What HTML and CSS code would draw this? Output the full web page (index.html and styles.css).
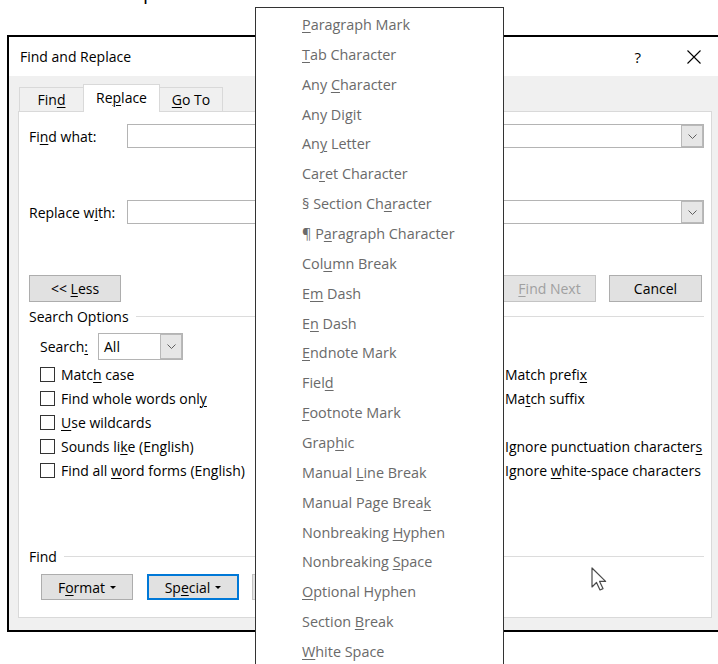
FILE: index.html
```html
<!DOCTYPE html>
<html lang="en">
<head>
<meta charset="utf-8">
<title>Find and Replace</title>
<link rel="stylesheet" href="styles.css">
</head>
<body>
<div class="caption"><span>p</span></div>

<div class="dialog">
  <div class="titlebar">
    <span class="title">Find and Replace</span>
    <div class="title-actions">
      <span class="help">?</span>
      <svg class="close" width="14" height="14" viewBox="0 0 14 14"><path d="M0.5 0.5L13.5 13.5M13.5 0.5L0.5 13.5" stroke="#000" stroke-width="1.1" fill="none"/></svg>
    </div>
  </div>

  <div class="body">
    <div class="tabs">
      <div class="tab tab-find"><span>Fin<u>d</u></span></div>
      <div class="tab tab-replace active"><span>Re<u>p</u>lace</span></div>
      <div class="tab tab-goto"><span><u>G</u>o To</span></div>
    </div>

    <div class="panel">
      <div class="field">
        <label class="field-label">Fi<u>n</u>d what:</label>
        <div class="combo">
          <span class="combo-btn"><svg width="9" height="5" viewBox="0 0 9 5"><path d="M0.5 0.5L4.5 4.5L8.5 0.5" fill="none" stroke="#5f5f5f"/></svg></span>
        </div>
      </div>

      <div class="field field-replace">
        <label class="field-label">Replace w<u>i</u>th:</label>
        <div class="combo">
          <span class="combo-btn"><svg width="9" height="5" viewBox="0 0 9 5"><path d="M0.5 0.5L4.5 4.5L8.5 0.5" fill="none" stroke="#5f5f5f"/></svg></span>
        </div>
      </div>

      <div class="actions">
        <button class="btn btn-less"><span>&lt;&lt; <u>L</u>ess</span></button>
        <div class="action-group">
          <button class="btn disabled"><span><u>F</u>ind Next</span></button>
          <button class="btn"><span>Cancel</span></button>
        </div>
      </div>

      <div class="group-head"><span>Search Options</span><i class="rule"></i></div>

      <div class="search-row">
        <label class="search-label">Search<u>:</u></label>
        <div class="select">
          <span class="select-value">All</span>
          <span class="combo-btn"><svg width="9" height="5" viewBox="0 0 9 5"><path d="M0.5 0.5L4.5 4.5L8.5 0.5" fill="none" stroke="#5f5f5f"/></svg></span>
        </div>
      </div>

      <div class="options">
        <label class="check"><span class="box"></span><span>Matc<u>h</u> case</span></label>
        <label class="check"><span class="box"></span><span>Match prefi<u>x</u></span></label>
        <label class="check"><span class="box"></span><span>Find whole words onl<u>y</u></span></label>
        <label class="check"><span class="box"></span><span>Ma<u>t</u>ch suffix</span></label>
        <label class="check"><span class="box"></span><span><u>U</u>se wildcards</span></label>
        <span></span>
        <label class="check"><span class="box"></span><span>Sounds li<u>k</u>e (English)</span></label>
        <label class="check"><span class="box"></span><span>Ignore punctuation character<u>s</u></span></label>
        <label class="check"><span class="box"></span><span>Find all <u>w</u>ord forms (English)</span></label>
        <label class="check"><span class="box"></span><span>Ignore <u>w</u>hite-space characters</span></label>
      </div>

      <div class="group-head group-find"><span>Find</span><i class="rule"></i></div>

      <div class="find-buttons">
        <button class="btn btn-small"><span>F<u>o</u>rmat</span><i class="caret"></i></button>
        <button class="btn btn-small focused"><span>Sp<u>e</u>cial</span><i class="caret"></i></button>
        <button class="btn btn-wide disabled" aria-label="No Formatting"></button>
      </div>
    </div>
  </div>
</div>

<ul class="menu">
  <li><u>P</u>aragraph Mark</li>
  <li><u>T</u>ab Character</li>
  <li>Any <u>C</u>haracter</li>
  <li>Any Di<u>g</u>it</li>
  <li>An<u>y</u> Letter</li>
  <li>Ca<u>r</u>et Character</li>
  <li>§ Section Ch<u>a</u>racter</li>
  <li>¶ P<u>a</u>ragraph Character</li>
  <li>Col<u>u</u>mn Break</li>
  <li>E<u>m</u> Dash</li>
  <li>E<u>n</u> Dash</li>
  <li><u>E</u>ndnote Mark</li>
  <li>Fiel<u>d</u></li>
  <li><u>F</u>ootnote Mark</li>
  <li>Grap<u>h</u>ic</li>
  <li>Manual <u>L</u>ine Break</li>
  <li>Manual Page Brea<u>k</u></li>
  <li>Nonbreaking <u>H</u>yphen</li>
  <li>Nonbreaking <u>S</u>pace</li>
  <li><u>O</u>ptional Hyphen</li>
  <li>Section <u>B</u>reak</li>
  <li><u>W</u>hite Space</li>
</ul>

<svg class="pointer" width="16" height="25" viewBox="0 0 16 25"><path d="M1 1L1 20L5.5 15.5L9 23L12 21.6L8.6 14.4L14.6 14.4Z" fill="#fff" stroke="#4a4a4a" stroke-width="1.2" stroke-linejoin="round"/></svg>
</body>
</html>
```

FILE: styles.css
```css
* {
  box-sizing: border-box;
}

html,
body {
  margin: 0;
  padding: 0;
}

body {
  width: 718px;
  height: 664px;
  overflow: hidden;
  position: relative;
  background: #fff;
  font-family: "Open Sans", "Noto Sans", sans-serif;
  font-size: 14px;
  color: #000;
}

u {
  text-decoration: underline;
  text-decoration-thickness: 1px;
  text-underline-offset: 2px;
}

button {
  font: inherit;
  color: inherit;
  padding: 0;
}

/* heading above the dialog, only its descender shows */
.caption {
  height: 35px;
  overflow: hidden;
}

.caption span {
  display: block;
  margin: -18px 0 0 143px;
  font-size: 20px;
  line-height: 20px;
}

/* dialog window */
.dialog {
  width: 720px;
  height: 597px;
  margin-left: 7px;
  border-top: 2px solid #000;
  border-left: 2px solid #000;
  border-bottom: 2px solid #000;
  background: #f0f0f0;
  display: flex;
  flex-direction: column;
}

.titlebar {
  flex: none;
  height: 39px;
  background: #fff;
  display: flex;
  align-items: center;
  padding: 0 26px 0 11px;
}

.title {
  font-size: 14px;
}

.title-actions {
  margin-left: auto;
  display: flex;
  align-items: center;
  gap: 46px;
}

.help {
  font-size: 15px;
}

.body {
  flex: 1;
  display: flex;
  flex-direction: column;
  padding: 0 0 12px 9px;
}

/* tab strip */
.tabs {
  flex: none;
  height: 35px;
  display: flex;
  align-items: flex-end;
  padding-left: 1px;
}

.tab {
  height: 24px;
  border: 1px solid #d9d9d9;
  border-bottom: none;
  background: #f0f0f0;
  display: flex;
  align-items: center;
  justify-content: center;
}

.tab-find {
  width: 64px;
  border-right: none;
}

.tab-replace {
  width: 77px;
}

.tab-goto {
  width: 63px;
  border-left: none;
}

.tab.active {
  height: 28px;
  background: #fff;
  margin-bottom: -1px;
  position: relative;
  z-index: 1;
  padding-bottom: 2px;
}

.panel {
  flex: 1;
  width: 694px;
  background: #fff;
  border: 1px solid #d9d9d9;
  padding: 12px 7px 0 10px;
  display: flex;
  flex-direction: column;
}

/* text fields */
.field {
  display: flex;
  align-items: center;
  height: 24px;
}

.field-replace {
  margin-top: 52px;
}

.field-label {
  width: 98px;
  flex: none;
}

.combo {
  flex: 1;
  height: 24px;
  border: 1px solid #b4b4b4;
  display: flex;
  justify-content: flex-end;
}

.combo-btn {
  width: 22px;
  height: 22px;
  background: #e6e6e6;
  border: 1px solid #b9b9b9;
  display: flex;
  align-items: center;
  justify-content: center;
}

/* buttons */
.actions {
  margin-top: 51px;
  height: 27px;
  display: flex;
  justify-content: space-between;
}

.action-group {
  display: flex;
  gap: 13px;
  margin-right: 2px;
}

.btn {
  width: 93px;
  height: 27px;
  border: 1px solid #adadad;
  background: #e1e1e1;
  display: flex;
  align-items: center;
  justify-content: center;
  gap: 5px;
}

.btn-less {
  width: 92px;
}

.btn.disabled {
  color: #a0a0a0;
  border-color: #c4c4c4;
  background: #e3e3e3;
}

.btn.focused {
  border: 2px solid #0078d7;
}

/* section captions */
.group-head {
  margin-top: 6px;
  height: 16px;
  display: flex;
  align-items: center;
  gap: 7px;
}

.group-find {
  margin-top: 66px;
}

.rule {
  flex: 1;
  height: 1px;
  background: #dcdcdc;
}

.search-row {
  margin-top: 9px;
  padding-left: 11px;
  height: 27px;
  display: flex;
  align-items: center;
}

.search-label {
  width: 58px;
  flex: none;
}

.select {
  width: 85px;
  height: 27px;
  border: 1px solid #b4b4b4;
  display: flex;
  align-items: center;
  justify-content: space-between;
  padding-left: 5px;
}

.select .combo-btn {
  height: 25px;
}

/* checkbox options */
.options {
  margin-top: 2px;
  padding-left: 11px;
  display: grid;
  grid-template-columns: 444px 1fr;
  grid-auto-rows: 24px;
}

.check {
  display: flex;
  align-items: center;
  gap: 6px;
  white-space: nowrap;
}

.box {
  width: 15px;
  height: 15px;
  border: 1px solid #333;
  background: #fff;
  flex: none;
}

.find-buttons {
  margin-top: 10px;
  padding-left: 12px;
  display: flex;
  gap: 14px;
}

.btn-small {
  width: 92px;
  height: 26px;
}

.btn-wide {
  width: 130px;
  height: 26px;
  margin-left: -1px;
}

.caret {
  width: 0;
  height: 0;
  border-left: 3px solid transparent;
  border-right: 3px solid transparent;
  border-top: 3px solid #000;
}

/* special characters drop-down menu */
.menu {
  position: absolute;
  left: 255px;
  top: 7px;
  width: 249px;
  height: 690px;
  margin: 0;
  padding: 2px 0 0;
  list-style: none;
  background: #fff;
  border: 1px solid #333;
  color: #6a6a6a;
  font-size: 14.4px;
  z-index: 5;
}

.menu li {
  height: 29.86px;
  line-height: 29.86px;
  padding-left: 46px;
  white-space: nowrap;
}

.pointer {
  position: absolute;
  left: 591px;
  top: 567px;
}
```
